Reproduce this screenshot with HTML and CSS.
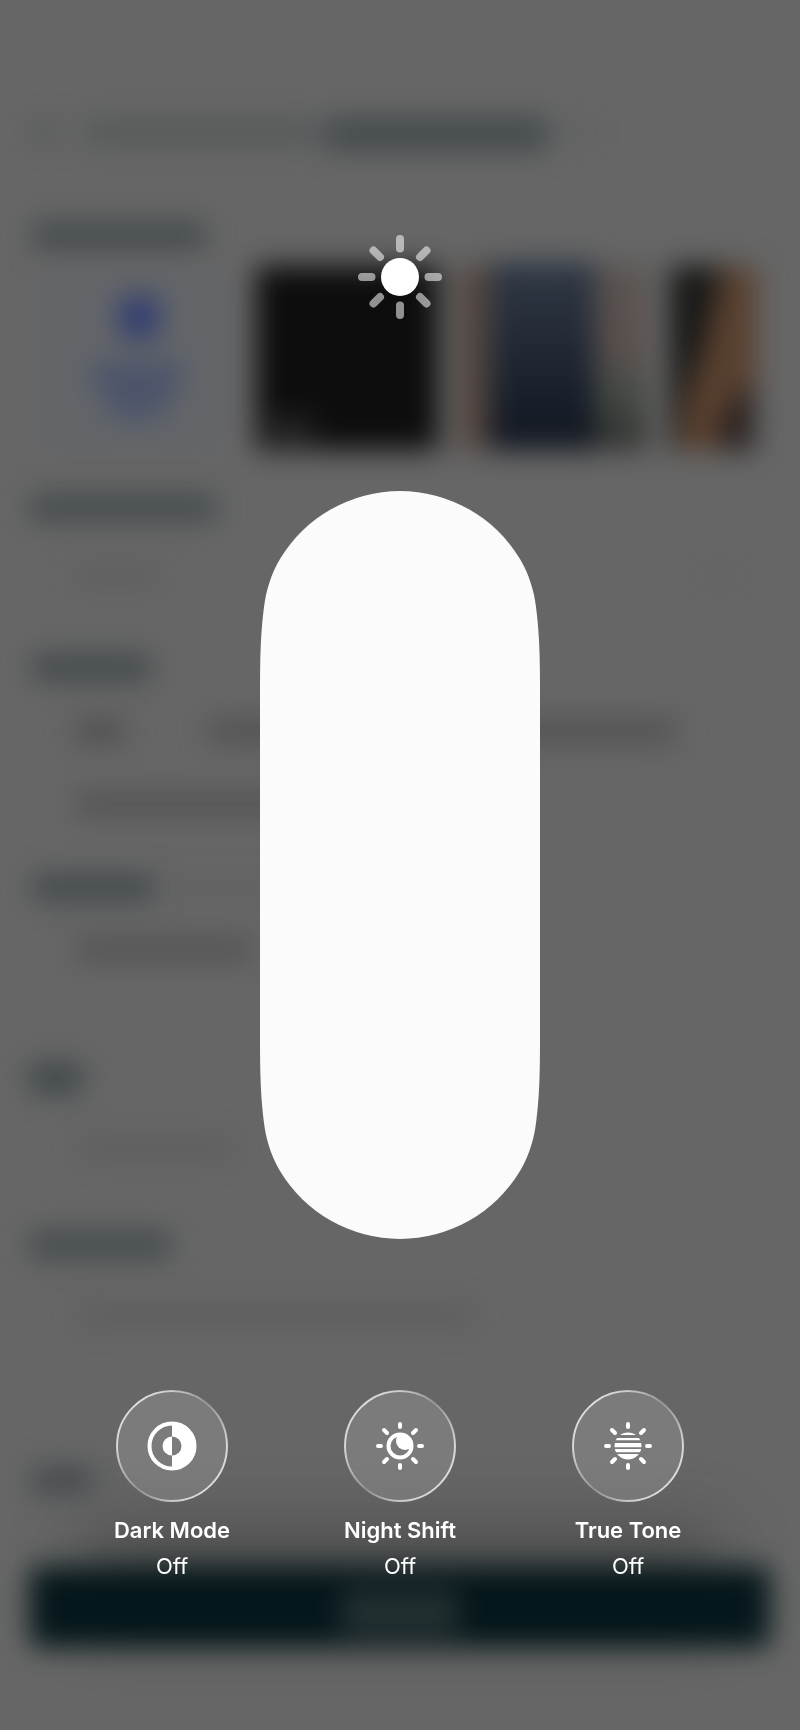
FILE: index.html
```html
<!DOCTYPE html>
<html lang="en">
<head>
<meta charset="utf-8">
<meta name="viewport" content="width=device-width, initial-scale=1">
<title>Brightness</title>
<link rel="stylesheet" href="styles.css">
</head>
<body>
<svg class="backdrop" viewBox="0 0 800 1730" preserveAspectRatio="none" aria-hidden="true">
  <defs>
    <filter id="soft" x="-100" y="-100" width="1000" height="1930" filterUnits="userSpaceOnUse" color-interpolation-filters="sRGB"><feGaussianBlur stdDeviation="14"/></filter>
    <filter id="wide" x="-100" y="-100" width="1000" height="1930" filterUnits="userSpaceOnUse" color-interpolation-filters="sRGB"><feGaussianBlur stdDeviation="34"/></filter>
    <linearGradient id="phone" x1="0" y1="0" x2="0" y2="1"><stop offset="0" stop-color="#303946"/><stop offset="1" stop-color="#10151f"/></linearGradient>
    <linearGradient id="side" x1="0" y1="0" x2="0" y2="1"><stop offset="0" stop-color="#5a5451"/><stop offset=".45" stop-color="#5a504d"/><stop offset=".7" stop-color="#444a45"/><stop offset="1" stop-color="#2f302d"/></linearGradient>
  </defs>
  <!-- heading and section labels -->
  <g filter="url(#soft)" fill="#3d4548">
    <rect x="34" y="120" width="22" height="24" opacity=".35"/>
    <rect x="84" y="118" width="236" height="28" opacity=".35"/>
    <rect x="326" y="118" width="222" height="32" opacity=".85"/>
    <rect x="565" y="124" width="32" height="16" opacity=".15"/>
    <rect x="33" y="222" width="172" height="26" opacity=".85"/>
    <rect x="30" y="495" width="186" height="25" opacity=".85"/>
    <rect x="33" y="655" width="117" height="25" opacity=".9"/>
    <rect x="33" y="875" width="120" height="25" opacity=".9"/>
    <rect x="30" y="1064" width="52" height="28"/>
    <rect x="30" y="1232" width="140" height="26" opacity=".85"/>
    <rect x="32" y="1467" width="60" height="26" opacity=".8"/>
  </g>
  <!-- field values and chips -->
  <g filter="url(#soft)" fill="#4c4c4c">
    <rect x="74" y="565" width="86" height="20" opacity=".25"/>
    <rect x="710" y="568" width="20" height="16" opacity=".2"/>
    <rect x="76" y="719" width="48" height="24" opacity=".85"/>
    <rect x="208" y="719" width="92" height="24" opacity=".75"/>
    <rect x="500" y="719" width="176" height="24" opacity=".75"/>
    <rect x="76" y="792" width="240" height="24" opacity=".65"/>
    <rect x="170" y="879" width="100" height="18" opacity=".15"/>
    <rect x="76" y="937" width="176" height="24" opacity=".65"/>
    <rect x="80" y="1137" width="152" height="22" opacity=".3"/>
    <rect x="80" y="1304" width="394" height="22" opacity=".3"/>
  </g>
  <!-- image row -->
  <g filter="url(#soft)">
    <rect x="40" y="272" width="188" height="180" fill="#61646b" opacity=".55"/>
    <rect x="120" y="296" width="38" height="42" fill="#303d70"/>
    <rect x="92" y="362" width="90" height="28" fill="#4b546b"/>
    <rect x="108" y="390" width="58" height="28" fill="#4b546b"/>
    <rect x="256" y="266" width="182" height="184" fill="#0d0d0e"/>
    <rect x="264" y="415" width="50" height="30" fill="#242423"/>
    <rect x="457" y="266" width="190" height="184" fill="url(#side)"/>
    <rect x="457" y="266" width="32" height="184" fill="#544741"/>
    <rect x="490" y="262" width="106" height="188" fill="url(#phone)"/>
    <rect x="670" y="266" width="84" height="184" fill="#181817"/>
    <path d="M722 266h34v130l-28 54h-52l8-50 20-54z" fill="#58402f"/>
    <path d="M752 380v70h-36l10-40z" fill="#2a2120"/>
  </g>
  <!-- primary button -->
  <rect x="80" y="1530" width="640" height="90" fill="#333" opacity=".5" filter="url(#wide)"/>
  <g filter="url(#soft)">
    <rect x="30" y="1567" width="740" height="80" rx="8" fill="#05171b"/>
    <rect x="342" y="1590" width="116" height="44" fill="#283335" opacity=".9"/>
  </g>
</svg>

<main class="panel">
  <svg class="sun" viewBox="0 0 88 88" aria-hidden="true">
    <circle cx="44" cy="44" r="19" fill="#fff"/>
    <path class="sun-rays" d="M44 15.500V6M44 72.500v9.500M15.500 44H6M72.500 44h9.500M24 24l-6.500-6.500M64 24l6.500-6.500M24 64l-6.500 6.500M64 64l6.500 6.500"/>
  </svg>

  <label class="slider">
    <svg class="slider-shape" viewBox="0 0 280 748" aria-hidden="true">
      <path fill="#fbfbfb" d="M0 200C0 160 1 140 4 116C6 100 11 83 20 68A140 140 0 0 1 260 68C269 83 274 100 276 116C279 140 280 160 280 200V548C280 588 279 608 276 632C274 648 269 665 260 680A140 140 0 0 1 20 680C11 665 6 648 4 632C1 608 0 588 0 548Z"/>
    </svg>
    <input class="slider-input" type="range" min="0" max="100" value="100" aria-label="Brightness">
  </label>

  <div class="controls">
    <button class="control" type="button" aria-pressed="false">
      <svg class="disc" viewBox="0 0 112 112" aria-hidden="true">
        <defs>
          <linearGradient id="rim" x1="0" y1=".1" x2="1" y2=".9">
            <stop offset="0" stop-color="#fff" stop-opacity=".8"/><stop offset=".2" stop-color="#fff" stop-opacity=".7"/>
            <stop offset=".5" stop-color="#fff" stop-opacity=".25"/>
            <stop offset=".8" stop-color="#fff" stop-opacity=".7"/><stop offset="1" stop-color="#fff" stop-opacity=".8"/>
          </linearGradient>
        </defs>
        <circle class="disc-body" cx="56" cy="56" r="55"/>
        <circle cx="56" cy="56" r="22.500" fill="none" stroke="#fff" stroke-width="4"/>
        <path fill="#fff" d="M56 32a24 24 0 0 1 0 48V65.500a9.500 9.500 0 0 0 0-19zM56 46.500v19a9.500 9.500 0 0 1 0-19z"/>
      </svg>
      <span class="name">Dark Mode</span>
      <span class="state">Off</span>
    </button>
    <button class="control" type="button" aria-pressed="false">
      <svg class="disc" viewBox="0 0 112 112" aria-hidden="true">
        <defs><clipPath id="ball"><circle cx="56" cy="56" r="13.500"/></clipPath></defs>
        <circle class="disc-body" cx="56" cy="56" r="55"/>
        <path class="disc-rays" d="M56 37v-3M56 75v3M37 56h-3M75 56h3M43 43l-3-3M69 43l3-3M43 69l-3 3M69 69l3 3"/>
        <circle cx="56" cy="56" r="11.500" fill="none" stroke="#fff" stroke-width="4"/>
        <circle clip-path="url(#ball)" cx="61" cy="51" r="9" fill="#fff"/>
      </svg>
      <span class="name">Night Shift</span>
      <span class="state">Off</span>
    </button>
    <button class="control" type="button" aria-pressed="false">
      <svg class="disc" viewBox="0 0 112 112" aria-hidden="true">
        <circle class="disc-body" cx="56" cy="56" r="55"/>
        <path class="disc-rays" d="M56 37v-3M56 75v3M37 56h-3M75 56h3M43 43l-3-3M69 43l3-3M43 69l-3 3M69 69l3 3"/>
        <path clip-path="url(#ball)" fill="#fff" d="M42 42h28v3H42zM42 48h28v2.300H42zM42 53h28v4.200H42zM42 59h28v3.300H42zM42 64h28v6H42z"/>
      </svg>
      <span class="name">True Tone</span>
      <span class="state">Off</span>
    </button>
  </div>
</main>
</body>
</html>
```
FILE: styles.css
```css
* {
  box-sizing: border-box;
}

body {
  margin: 0;
  position: relative;
  min-height: 100vh;
  overflow-x: hidden;
  background: #666;
  color: #fff;
  font-family: Inter, "Liberation Sans", sans-serif;
}

.backdrop {
  position: absolute;
  inset: 0;
  width: 100%;
  height: 100%;
}

.panel {
  position: relative;
  display: flex;
  flex-direction: column;
  align-items: center;
  padding: 233px 0 96px;
}

.sun {
  width: 88px;
  height: 88px;
}

.sun-rays {
  fill: none;
  stroke: #fff;
  stroke-opacity: 0.55;
  stroke-width: 8;
  stroke-linecap: round;
}

.slider {
  position: relative;
  display: block;
  width: 35%;
  min-width: 200px;
  max-width: 280px;
  margin-top: 170px;
}

.slider-shape {
  display: block;
  width: 100%;
}

.slider-input {
  position: absolute;
  inset: 0;
  width: 100%;
  height: 100%;
  margin: 0;
  opacity: 0;
  writing-mode: vertical-lr;
  direction: rtl;
  cursor: pointer;
}

.controls {
  display: grid;
  grid-template-columns: repeat(3, 1fr);
  width: 100%;
  max-width: 684px;
  margin-top: 151px;
}

.control {
  display: flex;
  flex-direction: column;
  align-items: center;
  padding: 0;
  border: 0;
  background: none;
  color: inherit;
  font: inherit;
  font-size: 22px;
  line-height: 36px;
  cursor: pointer;
}

.disc {
  width: 112px;
  height: 112px;
  margin-bottom: 10px;
}

.disc-body {
  fill: rgb(255 255 255 / 0.14);
  stroke: url(#rim);
  stroke-width: 2;
}

.disc-rays {
  fill: none;
  stroke: #fff;
  stroke-width: 4;
  stroke-linecap: round;
}

.name {
  font-weight: 600;
}

.state {
  font-weight: 400;
}
```
